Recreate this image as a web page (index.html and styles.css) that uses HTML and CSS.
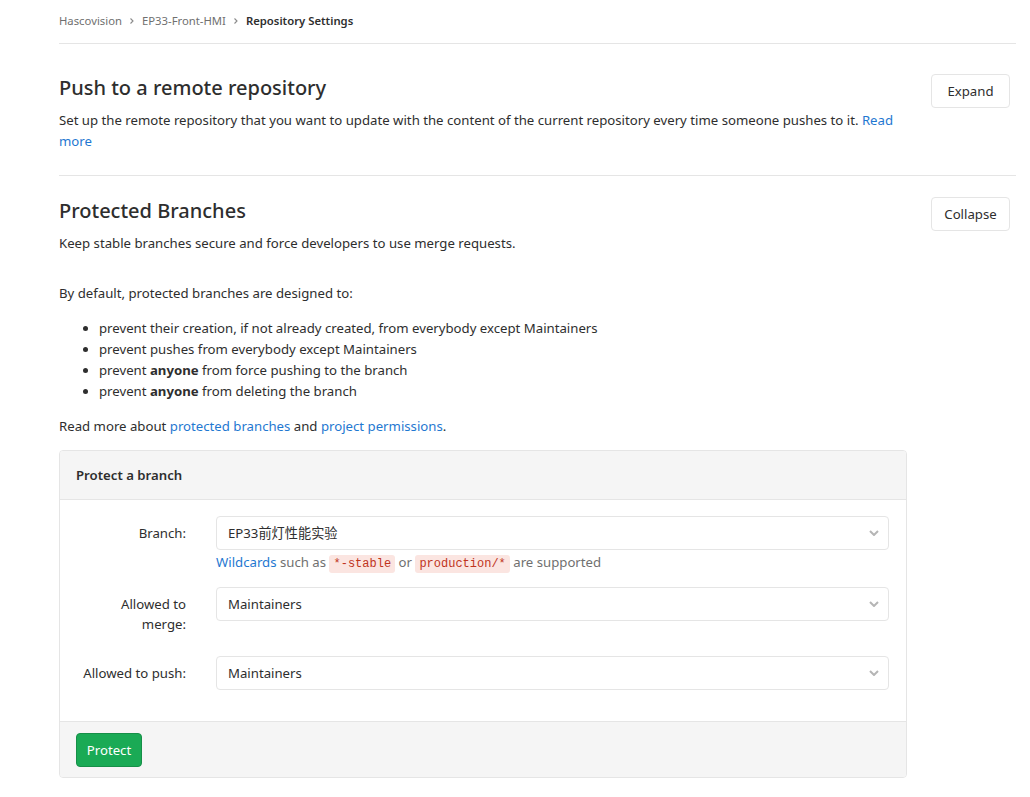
FILE: index.html
```html
<!DOCTYPE html>
<html lang="en">
<head>
<meta charset="utf-8">
<title>Repository Settings</title>
<link rel="stylesheet" href="styles.css">
</head>
<body>
<div class="page">
  <nav class="breadcrumbs">
    <a href="#" class="crumb">Hascovision</a>
    <svg class="sep" viewBox="0 0 6 8" width="6" height="8"><path d="M1.5 1.5 L4 4 L1.5 6.5" fill="none" stroke="#8a8a8a" stroke-width="1.1"/></svg>
    <a href="#" class="crumb">EP33-Front-HMI</a>
    <svg class="sep" viewBox="0 0 6 8" width="6" height="8"><path d="M1.5 1.5 L4 4 L1.5 6.5" fill="none" stroke="#8a8a8a" stroke-width="1.1"/></svg>
    <span class="crumb current">Repository Settings</span>
  </nav>

  <section class="settings first">
    <div class="settings-header">
      <div class="settings-text">
        <h4 class="settings-title">Push to a remote repository</h4>
        <p class="settings-desc">Set up the remote repository that you want to update with the content of the current repository every time someone pushes to it. <a href="#">Read more</a></p>
      </div>
      <button class="btn">Expand</button>
    </div>
  </section>

  <section class="settings second">
    <div class="settings-header">
      <div class="settings-text">
        <h4 class="settings-title">Protected Branches</h4>
        <p class="settings-desc">Keep stable branches secure and force developers to use merge requests.</p>
      </div>
      <button class="btn">Collapse</button>
    </div>
    <div class="settings-body">
      <p class="intro">By default, protected branches are designed to:</p>
      <ul class="rules">
        <li>prevent their creation, if not already created, from everybody except Maintainers</li>
        <li>prevent pushes from everybody except Maintainers</li>
        <li>prevent <strong>anyone</strong> from force pushing to the branch</li>
        <li>prevent <strong>anyone</strong> from deleting the branch</li>
      </ul>
      <p class="readmore">Read more about <a href="#">protected branches</a> and <a href="#">project permissions</a>.</p>

      <div class="card">
        <div class="card-header">Protect a branch</div>
        <div class="card-body">
          <div class="form-row">
            <label class="form-label">Branch:</label>
            <div class="form-field">
              <div class="select">
                <span>EP33前灯性能实验</span>
                <svg class="chev" viewBox="0 0 10 6" width="10" height="6"><path d="M1 1 L5 5 L9 1" fill="none" stroke="#b5b5b5" stroke-width="2"/></svg>
              </div>
              <p class="help"><a href="#">Wildcards</a> such as <code>*-stable</code> or <code>production/*</code> are supported</p>
            </div>
          </div>
          <div class="form-row">
            <label class="form-label">Allowed to merge:</label>
            <div class="form-field">
              <div class="select">
                <span>Maintainers</span>
                <svg class="chev" viewBox="0 0 10 6" width="10" height="6"><path d="M1 1 L5 5 L9 1" fill="none" stroke="#b5b5b5" stroke-width="2"/></svg>
              </div>
            </div>
          </div>
          <div class="form-row">
            <label class="form-label">Allowed to push:</label>
            <div class="form-field">
              <div class="select">
                <span>Maintainers</span>
                <svg class="chev" viewBox="0 0 10 6" width="10" height="6"><path d="M1 1 L5 5 L9 1" fill="none" stroke="#b5b5b5" stroke-width="2"/></svg>
              </div>
            </div>
          </div>
        </div>
        <div class="card-footer">
          <button class="btn btn-success">Protect</button>
        </div>
      </div>
    </div>
  </section>
</div>
</body>
</html>
```

FILE: styles.css
```css
* { box-sizing: border-box; }
html, body { margin: 0; padding: 0; background: #fff; }
body {
  font-family: "Noto Sans", "Noto Sans CJK SC", sans-serif;
  font-size: 13.2px;
  color: #2e2e2e;
  line-height: 21px;
}
a { color: #1f78d1; text-decoration: none; }
p { margin: 0; }

.page { padding: 0 14px 0 59px; }

.breadcrumbs {
  height: 44px;
  border-bottom: 1px solid #e5e5e5;
  display: flex;
  align-items: center;
  padding-bottom: 2px;
  font-size: 11.3px;
}
.crumb { color: #707070; }
.crumb.current { color: #2e2e2e; font-weight: 600; }
.sep { margin: 0 7px 0 7px; }

.settings { border-bottom: 1px solid #e5e5e5; }
.settings.first { padding: 30px 0 23px; }
.settings.second { padding: 21px 0 0; border-bottom: none; }

.settings-header { display: flex; align-items: flex-start; justify-content: space-between; margin-right: 6px; }
.settings-text { flex: 1; padding-right: 30px; }
.settings-title {
  margin: 2px 0 10px;
  font-size: 20px;
  line-height: 24px;
  font-weight: 500;
}
.btn {
  font-family: inherit;
  font-size: 13.2px;
  color: #2e2e2e;
  background: #fff;
  border: 1px solid #e5e5e5;
  border-radius: 4px;
  height: 34px;
  padding: 0 12px;
  min-width: 79px;
  cursor: pointer;
}
.settings-body { padding-top: 29px; }
.intro { margin-bottom: 14px; }
.rules { margin: 0 0 14px; padding-left: 40px; }
.readmore { margin-bottom: 13px; }

.card {
  width: 848px;
  border: 1px solid #e5e5e5;
  border-radius: 4px;
  overflow: hidden;
}
.card-header {
  background: #f5f5f5;
  border-bottom: 1px solid #e5e5e5;
  height: 49px;
  padding: 0 16px;
  display: flex;
  align-items: center;
  font-weight: 600;
}
.card-body { padding: 16px 17px 16px 16px; }
.form-row {
  display: grid;
  grid-template-columns: 110px 1fr;
  column-gap: 30px;
  margin-bottom: 15px;
}
.form-label {
  text-align: right;
  padding: 7px 0 7px;
  line-height: 20px;
}
.select {
  height: 34px;
  border: 1px solid #e5e5e5;
  border-radius: 4px;
  display: flex;
  align-items: center;
  justify-content: space-between;
  padding: 0 9px 0 11px;
}
.chev { display: block; }
.help {
  color: #707070;
  margin-top: 2px;
  height: 20px;
  line-height: 20px;
  white-space: nowrap;
}
code {
  font-family: "Liberation Mono", monospace;
  font-size: 12px;
  line-height: 1;
  color: #c0341d;
  background: #fbe5e1;
  border-radius: 3px;
  padding: 2px 4px;
}
.card-footer {
  background: #f5f5f5;
  border-top: 1px solid #e5e5e5;
  padding: 11px 16px 10px;
}
.btn-success {
  background: #1aaa55;
  border-color: #168f48;
  color: #fff;
  min-width: 0;
  width: 66px;
  padding: 0;
}
```
